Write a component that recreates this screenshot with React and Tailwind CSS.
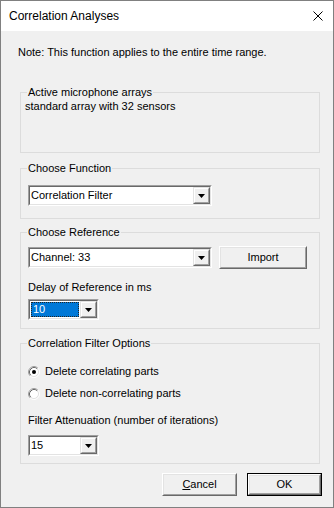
import React from 'react';

// classic sunken combo box with a raised drop button
function Combo({ className, text, selected }) {
    return (
        <div className={`flex h-[21px] border border-t-[#a0a0a0] border-l-[#a0a0a0] border-r-white border-b-white ${className}`}>
            <div className="flex flex-1 border border-t-[#696969] border-l-[#696969] border-r-[#e3e3e3] border-b-[#e3e3e3] bg-white">
                {selected ? (
                    <div className="flex flex-1 p-[1px]">
                        <div className="flex flex-1 items-center bg-[#0078d7] text-white border border-dotted border-[#222] pl-[1px]">{text}</div>
                    </div>
                ) : (
                    <div className="flex flex-1 items-center pl-[1px]">{text}</div>
                )}
                <DropButton />
            </div>
        </div>
    );
}

function DropButton() {
    return (
        <div className="w-[17px] flex border border-t-[#e3e3e3] border-l-[#e3e3e3] border-r-[#696969] border-b-[#696969]">
            <div className="flex flex-1 items-center justify-center border border-t-white border-l-white border-r-[#a0a0a0] border-b-[#a0a0a0] bg-[#f0f0f0]">
                <svg width="7" height="4" viewBox="0 0 7 4"><polygon points="0,0 7,0 3.5,4" fill="#000" /></svg>
            </div>
        </div>
    );
}

function Button({ className, children, isDefault }) {
    return (
        <div className={`flex h-[23px] ${isDefault ? "border border-black" : ""} ${className}`}>
            <div className="flex flex-1 border border-t-white border-l-white border-r-[#696969] border-b-[#696969]">
                <div className="flex flex-1 items-center justify-center border border-t-[#e3e3e3] border-l-[#e3e3e3] border-r-[#a0a0a0] border-b-[#a0a0a0] bg-[#f0f0f0]">
                    {children}
                </div>
            </div>
        </div>
    );
}

function Radio({ checked, label, className }) {
    return (
        <div className={`flex items-center h-[13px] ${className}`}>
            <svg width="12" height="12" viewBox="0 0 12 12" className="ml-[7px] mr-[5px] shrink-0">
                <circle cx="6" cy="6" r="4.5" fill="#fff" />
                <path d="M2.11 9.89 A5.5 5.5 0 0 1 9.89 2.11" stroke="#a0a0a0" fill="none" />
                <path d="M9.89 2.11 A5.5 5.5 0 0 1 2.11 9.89" stroke="#fff" fill="none" />
                <path d="M2.82 9.18 A4.5 4.5 0 0 1 9.18 2.82" stroke="#696969" fill="none" />
                <path d="M9.18 2.82 A4.5 4.5 0 0 1 2.82 9.18" stroke="#e3e3e3" fill="none" />
                {checked && <circle cx="6" cy="6" r="2" fill="#000" />}
            </svg>
            <span>{label}</span>
        </div>
    );
}

function Group({ title, children }) {
    return (
        <fieldset className="w-[300px] border border-[#dcdcdc] p-0 m-0">
            <legend className="ml-[6px] px-[1px] leading-[13px] p-0">{title}</legend>
            {children}
        </fieldset>
    );
}

export default function App() {
    return (
        <div className="w-[334px] h-[508px] border border-[#808080] bg-[#f0f0f0] flex flex-col text-[11px] leading-[13px] text-black font-['Liberation_Sans',Arial,sans-serif]">
            {/* Title bar */}
            <div className="h-[30px] bg-white flex items-center justify-between pl-[8px] pr-[10px]">
                <span className="text-[12px]">Correlation Analyses</span>
                <svg width="10" height="10" viewBox="0 0 10 10">
                    <path d="M0.5 0.5 L9.5 9.5 M9.5 0.5 L0.5 9.5" stroke="#000" strokeWidth="1" />
                </svg>
            </div>

            <div className="flex flex-col pl-[19px] pr-[11px]">
                <p className="mt-[15px] -ml-[2px]">Note: This function applies to the entire time range.</p>

                <div className="mt-[27px]">
                    <Group title="Active microphone arrays">
                        <div className="h-[53px] pl-[4px] pt-[1px]">standard array with 32 sensors</div>
                    </Group>
                </div>

                <div className="mt-[9px]">
                    <Group title="Choose Function">
                        <div className="h-[43px] pl-[7px] pt-[10px]">
                            <Combo className="w-[184px]" text="Correlation Filter" />
                        </div>
                    </Group>
                </div>

                <div className="mt-[7px]">
                    <Group title="Choose Reference">
                        <div className="h-[89px] pl-[7px] flex flex-col">
                            <div className="flex items-start gap-[7px]">
                                <Combo className="w-[184px] mt-[8px]" text="Channel: 33" />
                                <Button className="w-[88px] mt-[7px]">Import</Button>
                            </div>
                            <p className="mt-[12px]">Delay of Reference in ms</p>
                            <Combo className="w-[71px] mt-[5px]" text="10" selected />
                        </div>
                    </Group>
                </div>

                <div className="mt-[8px]">
                    <Group title="Correlation Filter Options">
                        <div className="h-[113px] flex flex-col">
                            <Radio className="mt-[15px]" checked label="Delete correlating parts" />
                            <Radio className="mt-[9px]" label="Delete non-correlating parts" />
                            <p className="mt-[14px] pl-[7px]">Filter Attenuation (number of iterations)</p>
                            <div className="pl-[7px] mt-[8px]">
                                <Combo className="w-[71px]" text="15" />
                            </div>
                        </div>
                    </Group>
                </div>

                <div className="flex justify-end gap-[10px] mt-[9px]">
                    <Button className="w-[75px]"><span><span className="underline">C</span>ancel</span></Button>
                    <Button className="w-[75px]" isDefault>OK</Button>
                </div>
            </div>
        </div>
    );
}
